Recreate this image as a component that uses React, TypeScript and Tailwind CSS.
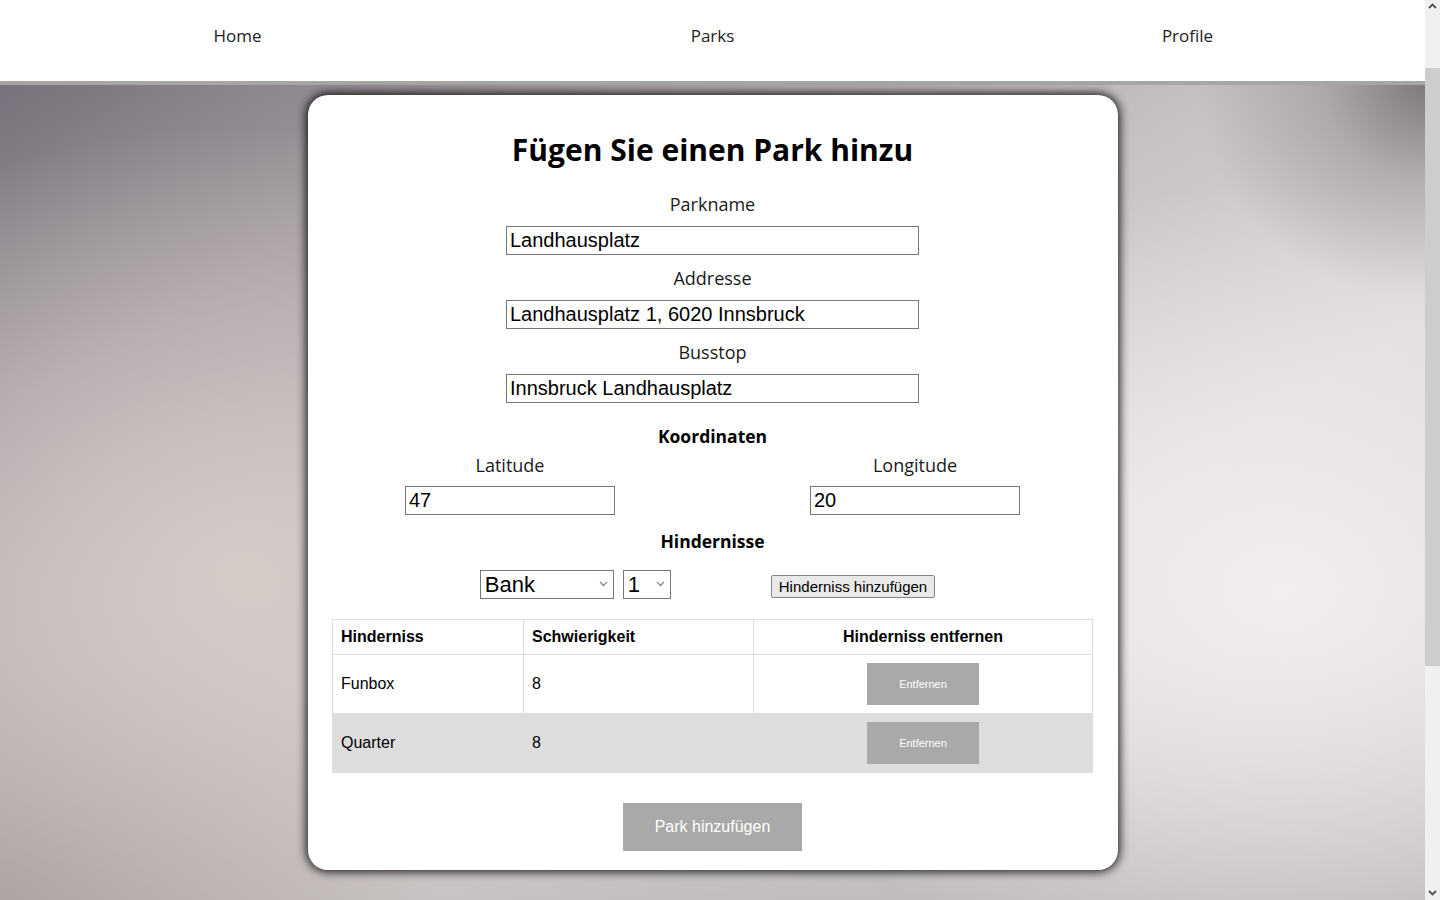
import React from 'react';

const segoe = { fontFamily: '"Open Sans", "Noto Sans", sans-serif' };
const arial = { fontFamily: '"Liberation Sans", Arial, sans-serif' };

function Label({ children, className = '' }: { children: React.ReactNode; className?: string }) {
  return (
    <div className={`h-[27px] text-center text-[18px] leading-[27px] text-[#1a1a1a] ${className}`} style={segoe}>
      {children}
    </div>
  );
}

function TextInput({ value, className = '' }: { value: string; className?: string }) {
  return (
    <input
      defaultValue={value}
      className={`block h-[29px] border border-[#767676] bg-white px-[3px] text-[20px] leading-[23px] text-black outline-none ${className}`}
      style={arial}
    />
  );
}

function Chevron() {
  return (
    <svg className="pointer-events-none absolute right-[6px] top-[11px]" width="9" height="6" viewBox="0 0 9 6">
      <path d="M1 1 L4.5 4.5 L8 1" stroke="#8a8a8a" strokeWidth="1.3" fill="none" />
    </svg>
  );
}

function Select({ options, width }: { options: string[]; width: string }) {
  return (
    <div className={`relative ${width}`}>
      <select
        className="block h-[29px] w-full appearance-none border border-[#767676] bg-white pl-[4px] text-[22px] leading-[25px] text-black outline-none"
        style={arial}
      >
        {options.map((o) => (
          <option key={o}>{o}</option>
        ))}
      </select>
      <Chevron />
    </div>
  );
}

function Scrollbar() {
  return (
    <div className="flex h-[900px] w-[15px] flex-col bg-[#f0f0f0]">
      <div className="flex h-[17px] items-start justify-center pt-[3px]">
        <svg width="9" height="6" viewBox="0 0 9 6">
          <path d="M1 5 L4.5 1.5 L8 5" stroke="#505050" strokeWidth="1.8" fill="none" />
        </svg>
      </div>
      <div className="mt-[51px] h-[598px] bg-[#cdcdcd]" />
      <div className="flex-1" />
      <div className="flex h-[17px] items-end justify-center pb-[4px]">
        <svg width="9" height="6" viewBox="0 0 9 6">
          <path d="M1 1 L4.5 4.5 L8 1" stroke="#505050" strokeWidth="1.8" fill="none" />
        </svg>
      </div>
    </div>
  );
}

const obstacles = [
  { name: 'Funbox', level: 8 },
  { name: 'Quarter', level: 8 },
];

export default function App() {
  return (
    <div className="flex h-[900px] w-[1440px] overflow-hidden bg-white">
      <div className="flex w-[1425px] flex-col">
        <header className="grid h-[85px] shrink-0 grid-cols-3 border-b-4 border-[#a6a6a6] bg-white text-[17px] text-[#222]" style={segoe}>
          {['Home', 'Parks', 'Profile'].map((item) => (
            <a key={item} className="pt-[24px] text-center leading-[24px]">
              {item}
            </a>
          ))}
        </header>

        {/* blurred photo backdrop, approximated with gradients */}
        <main className="flex-1 bg-[radial-gradient(ellipse_16%_26%_at_100%_0%,rgba(118,113,117,0.9)_0%,rgba(118,113,117,0.35)_45%,rgba(118,113,117,0)_100%),radial-gradient(ellipse_40%_50%_at_90%_62%,rgba(243,238,238,1)_0%,rgba(243,238,238,0.5)_50%,rgba(243,238,238,0)_100%),radial-gradient(ellipse_40%_55%_at_17%_60%,rgba(214,204,200,0.95)_0%,rgba(214,204,200,0.45)_50%,rgba(214,204,200,0)_100%),radial-gradient(ellipse_30%_40%_at_0%_100%,rgba(162,155,155,0.9)_0%,rgba(162,155,155,0)_100%),linear-gradient(180deg,rgba(150,145,145,0)_70%,rgba(150,145,145,0.35)_100%),linear-gradient(150deg,#77727b_0%,#a39ca1_20%,#c9c3c3_45%,#dedada_65%,#d0cdcc_100%)] pt-[10px]">
          <div className="mx-auto w-[810px] rounded-[20px] bg-white pb-[19px] pt-[37px] shadow-[0_0_10px_2px_rgba(0,0,0,0.85)]">
            <h1 className="h-[36px] text-center text-[30px] font-bold leading-[36px] text-black" style={segoe}>
              Fügen Sie einen Park hinzu
            </h1>

            <Label className="mt-[23px]">Parkname</Label>
            <TextInput value="Landhausplatz" className="mx-auto mt-[8px] w-[413px]" />
            <Label className="mt-[10px]">Addresse</Label>
            <TextInput value="Landhausplatz 1, 6020 Innsbruck" className="mx-auto mt-[8px] w-[413px]" />
            <Label className="mt-[10px]">Busstop</Label>
            <TextInput value="Innsbruck Landhausplatz" className="mx-auto mt-[8px] w-[413px]" />

            <h3 className="mt-[21px] h-[24px] text-center text-[17.5px] font-bold leading-[24px] text-black" style={segoe}>
              Koordinaten
            </h3>
            <div className="grid grid-cols-2">
              <div className="flex flex-col items-center">
                <Label className="mt-[4px]">Latitude</Label>
                <TextInput value="47" className="mt-[7px] w-[210px]" />
              </div>
              <div className="flex flex-col items-center">
                <Label className="mt-[4px]">Longitude</Label>
                <TextInput value="20" className="mt-[7px] w-[210px]" />
              </div>
            </div>

            <h3 className="mt-[14px] h-[24px] text-center text-[17.5px] font-bold leading-[24px] text-black" style={segoe}>
              Hindernisse
            </h3>
            <div className="mt-[17px] flex items-start justify-center pr-[10px]">
              <Select options={['Bank', 'Funbox', 'Quarter', 'Rail']} width="w-[134px]" />
              <div className="ml-[9px]">
                <Select options={['1', '2', '3', '4', '5', '6', '7', '8', '9', '10']} width="w-[48px]" />
              </div>
              <button
                className="ml-[100px] mt-[5px] h-[23px] rounded-[2px] border border-[#858585] bg-[#e9e9e9] px-[7px] text-[15px] leading-[17px] text-black"
                style={arial}
              >
                Hinderniss hinzufügen
              </button>
            </div>

            <table className="mx-auto mt-[20px] w-[761px] table-fixed border-collapse text-[16px] text-black" style={arial}>
              <thead>
                <tr>
                  <th className="w-[191px] border border-[#dddddd] px-2 py-2 text-left leading-[18px]">Hinderniss</th>
                  <th className="w-[230px] border border-[#dddddd] px-2 py-2 text-left leading-[18px]">Schwierigkeit</th>
                  <th className="border border-[#dddddd] px-2 py-2 text-center leading-[18px]">Hinderniss entfernen</th>
                </tr>
              </thead>
              <tbody>
                {obstacles.map((o, i) => (
                  <tr key={o.name} className={i % 2 === 1 ? 'bg-[#dddddd]' : 'bg-white'}>
                    <td className="border border-[#dddddd] px-2 leading-[18px]">{o.name}</td>
                    <td className="border border-[#dddddd] px-2 leading-[18px]">{o.level}</td>
                    <td className="border border-[#dddddd] px-2 py-[8px] text-center">
                      <button className="h-[42px] w-[112px] bg-[#a9a9a9] text-[11px] text-white">Entfernen</button>
                    </td>
                  </tr>
                ))}
              </tbody>
            </table>

            <div className="mt-[30px] flex justify-center">
              <button className="h-[48px] w-[179px] bg-[#a9a9a9] text-[16px] text-white" style={arial}>
                Park hinzufügen
              </button>
            </div>
          </div>
        </main>
      </div>
      <Scrollbar />
    </div>
  );
}
